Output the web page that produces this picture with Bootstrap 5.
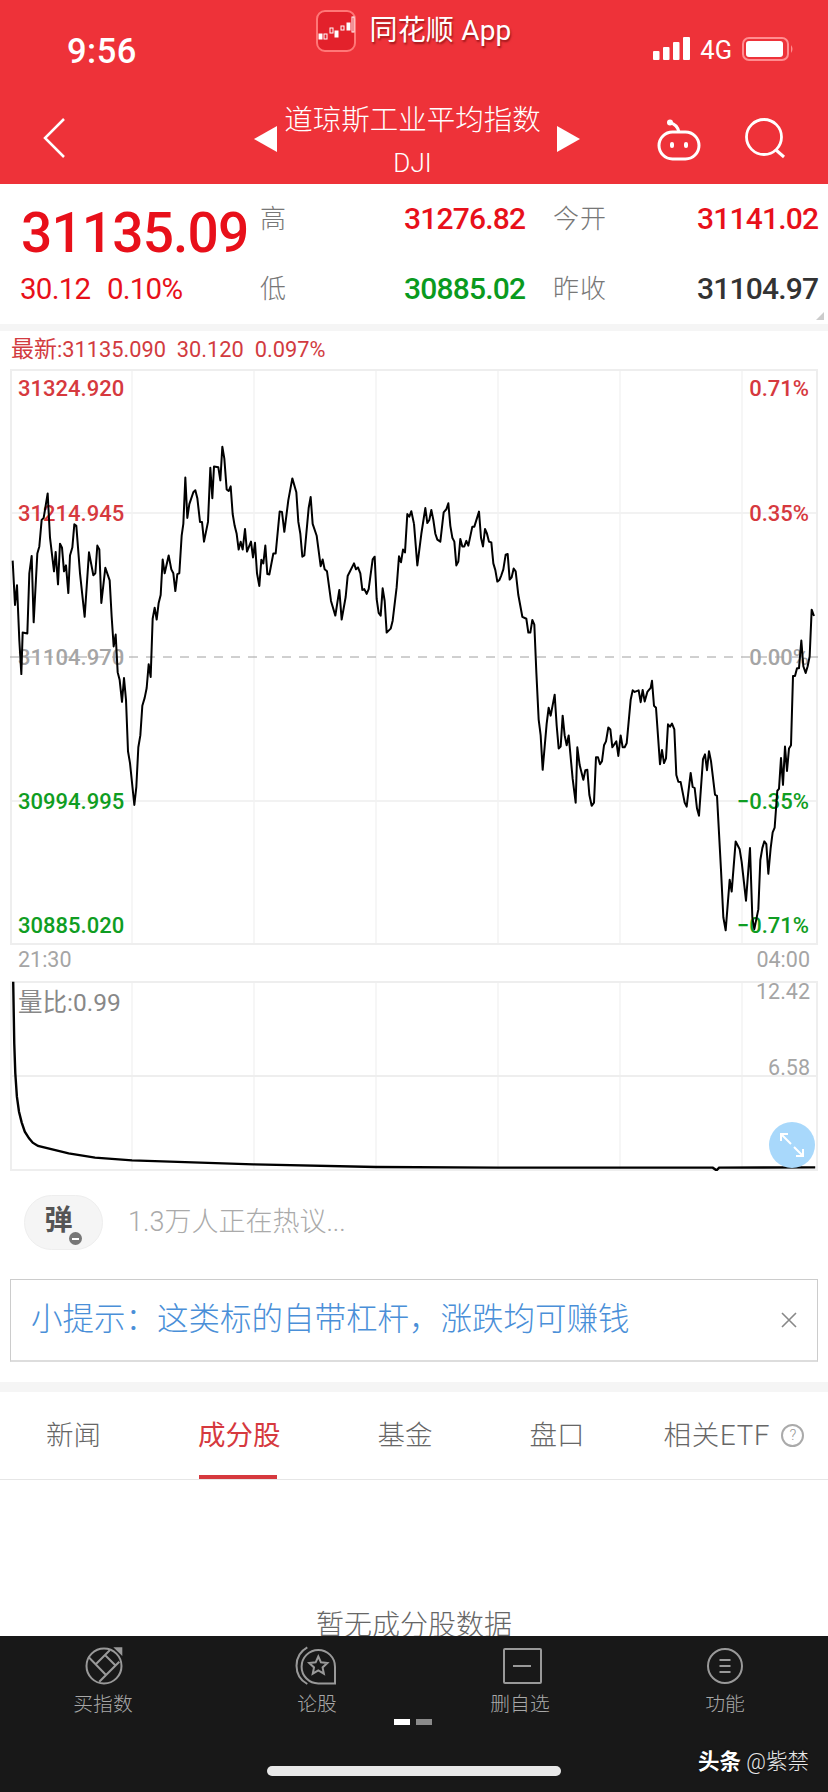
<!doctype html>
<html lang="zh">
<head>
<meta charset="utf-8">
<title>道琼斯工业平均指数</title>
<link href="https://cdn.jsdelivr.net/npm/bootstrap@5.3.0/dist/css/bootstrap.min.css" rel="stylesheet">
<style>
html,body{margin:0;background:#fff}
body{width:828px;height:1792px;overflow:hidden;font-family:Roboto,"Noto Sans CJK SC",sans-serif;color:#333}
.app-shell{width:828px;height:1792px;overflow:hidden}
.top-red{height:184px;background:#ee3239;color:#fff;flex:none}
.status-row{display:grid;grid-template-columns:1fr auto 1fr;height:100px}
.clock{font-size:34.5px;font-weight:500;padding:32px 0 0 67px;line-height:38px;letter-spacing:.5px}
.app-tag{padding-top:10px;gap:13px;font-size:28px;line-height:42px;text-shadow:1px 2px 2px rgba(90,0,0,.55);font-weight:400;letter-spacing:.2px;white-space:nowrap}
.net{padding:37px 33px 0 0;gap:10px;font-size:25.5px;line-height:27px;justify-content:flex-end}
.title-row{display:grid;grid-template-columns:1fr auto 1fr}
.back-wrap{padding:17px 0 0 42px}
.title-mid{gap:9px;margin-left:6px}
.tri-l,.tri-r{width:0;height:0;border-top:13px solid transparent;border-bottom:13px solid transparent;margin-top:26px}
.tri-l{border-right:23px solid #fff;margin-left:-1px}
.tri-r{border-left:23px solid #fff;margin-left:6px}
.title-text{font-size:28.5px;line-height:36px;font-weight:300;text-align:center;width:258px;margin:3px 0 0 -2px;white-space:nowrap}
.title-sub{font-size:26px;line-height:36px;margin-top:6px;font-weight:300}
.tool-wrap{padding:18px 41px 0 0;gap:44px;justify-content:flex-end}
.quote-grid{height:140px;flex:none;display:grid;grid-template-columns:260px 144px 120px 29px 144px 120px;grid-template-rows:70px 70px;align-items:center;position:relative}
.big-num{font-size:55px;font-weight:500;color:#e8101a;line-height:54px;padding:27px 0 0 21px;letter-spacing:-.85px;white-space:nowrap}
.sub-num{font-size:29.5px;color:#e8101a;padding-left:20px;white-space:nowrap;word-spacing:10px;line-height:32px;letter-spacing:-.75px}
.q-lab{font-size:26px;line-height:32px;color:#777;font-weight:300;letter-spacing:1px}
.q-val{font-size:30px;line-height:32px;font-weight:500;letter-spacing:-.8px;white-space:nowrap}
.v-red{color:#e8101a}.v-green{color:#0a9a1e}.v-dark{color:#333}
.corner-mark{position:absolute;right:4px;bottom:4px;width:0;height:0;border-left:8px solid transparent;border-bottom:8px solid #ccc}
.gap-band{height:7px;background:#f5f5f5;flex:none}
.latest{height:38px;padding-left:11px;font-size:21.8px;line-height:38px;color:#d23b40;white-space:pre}
.latest b{font-weight:400;font-size:23px}
.chart-svg{display:block;width:828px}
.num-r{fill:#d6393e}.num-g{fill:#0f9d22}.num-n{fill:#a5a5a5}
.chart-svg text{font-family:Roboto,sans-serif;font-size:22px;font-weight:500}
.t-row{height:36px;padding:3px 18px 0 18px;font-size:21.5px;line-height:24px;color:#a5a5a5}
.chart-svg .vol-lab{font-family:Roboto,"Noto Sans CJK SC",sans-serif;font-size:24.5px;font-weight:400;fill:#888}
.chart-svg .vol-num{font-size:21.5px;font-weight:400}
.dm-row{height:108px;flex:none;padding:24px 0 0 24px;gap:25px}
.dm-pill{width:79px;height:55px;border-radius:28px;background:#f5f5f5;border:1px solid #eee;position:relative;font-size:28px;line-height:50px;text-align:center;color:#555;padding-right:10px;font-weight:700}
.dm-minus{position:absolute;right:20px;bottom:4px;width:13px;height:13px;border-radius:50%;background:#777;display:flex;align-items:center;justify-content:center}
.dm-minus::before{content:"";width:7px;height:2px;background:#fff}
.dm-text{font-size:27px;line-height:54px;color:#aaa;font-weight:300;white-space:nowrap}
.tip-box{height:83px;margin:0 10px 0 10px;border:1px solid #ccc;border-bottom:2px solid #ddd;padding:0 20px 0 20px;flex:none;color:#4a8fd8;font-size:31.5px;font-weight:300;white-space:nowrap}
.band-two{height:10px;background:#f5f5f5;margin-top:20px;flex:none}
.tab-row{height:88px;flex:none;border-bottom:1px solid #e6e6e6;padding:0 0 0 46px;font-size:27.5px;color:#666;font-weight:300;white-space:nowrap;line-height:1}
.tab-item{margin-right:97px;position:relative;height:100%;display:flex;align-items:center}
.tab-item.gap-short{margin-right:79px}
.tab-item.last{margin-right:11px;letter-spacing:.8px}
.tab-item.on{color:#d6393e;font-weight:400}
.tab-item.on::after{content:"";position:absolute;left:1px;width:78px;height:4px;bottom:0;background:#d6393e}
.tab-help{width:23px;height:23px;border:2px solid #aaa;border-radius:50%;font-size:15px;color:#999;text-align:center;line-height:19px;flex:none}
.body-empty{overflow:hidden;min-height:0;text-align:center;font-size:28px;color:#666;font-weight:300;padding-top:126px;line-height:40px}
.foot-bar{height:156px;background:#181818;flex:none;position:relative}
.foot-grid{display:grid;grid-template-columns:214px 203px 205px 60px;padding:10px 0 0 73px}
.foot-item{width:60px;text-align:center;color:#a8a8a8;font-size:19.8px;line-height:24px;white-space:nowrap;font-weight:300;display:flex;flex-direction:column;align-items:center}
.foot-item span{margin-top:7px}
.ic-line{fill:none;stroke:#999;stroke-width:2}
.dots{gap:6px;justify-content:center;margin:2px 0 0 -2px}
.dot-a,.dot-b{width:16px;height:6px}
.dot-a{background:#fff}.dot-b{background:#8a8a8a}
.home-bar{position:absolute;left:267px;bottom:16px;width:294px;height:10px;border-radius:5px;background:#e8e8e8}
.mark-wm{position:absolute;right:19px;bottom:17px;color:#fff;font-size:21.5px;line-height:26px;white-space:nowrap;text-shadow:0 0 2px rgba(0,0,0,.6)}
.mark-wm b{font-weight:700}
.mark-wm i{font-style:normal;font-weight:300;color:#e8e8e8}
</style>
</head>
<body>
<div class="app-shell d-flex flex-column">
  <header class="top-red">
    <div class="status-row">
      <div class="clock">9:56</div>
      <div class="app-tag d-flex align-items-start">
        <svg width="40" height="42" viewBox="0 0 40 42"><rect x="1" y="1" width="38" height="40" rx="8" fill="#e3212b" stroke="#f77" stroke-width="2"/><g fill="#fff" stroke="#fff" stroke-width="1"><rect x="3" y="24" width="3" height="5"/><rect x="8" y="24" width="3" height="5" fill="none"/><rect x="14" y="18" width="3" height="5" fill="none"/><rect x="19" y="21" width="3" height="6"/><rect x="25" y="16" width="3" height="4" fill="none"/><rect x="31" y="13" width="3" height="7"/><rect x="36" y="7" width="2" height="15" fill="none"/></g></svg>
        <span>同花顺 App</span>
      </div>
      <div class="net d-flex align-items-start">
        <svg width="37" height="24" viewBox="0 0 37 24"><g fill="#fff"><rect x="0" y="14" width="6.5" height="9" rx="1"/><rect x="10" y="10" width="6.5" height="13" rx="1"/><rect x="20" y="5" width="6.5" height="18" rx="1"/><rect x="30" y="0" width="7" height="23" rx="1"/></g></svg>
        <span>4G</span>
        <svg width="53" height="24" viewBox="0 0 53 24"><rect x="1" y="1" width="45" height="22" rx="6" fill="none" stroke="#ff8d90" stroke-width="2"/><rect x="4" y="4" width="37" height="16" rx="3" fill="#fff"/><path d="M49 8q3 4 0 8z" fill="#ff8d90"/></svg>
      </div>
    </div>
    <div class="title-row">
      <div class="back-wrap"><svg width="24" height="42" viewBox="0 0 24 42"><path d="M22 2 3 21l19 19" fill="none" stroke="#fff" stroke-width="2.5"/></svg></div>
      <div class="title-mid d-flex align-items-start">
        <div class="tri-l"></div>
        <div class="title-text">道琼斯工业平均指数<div class="title-sub">DJI</div></div>
        <div class="tri-r"></div>
      </div>
      <div class="tool-wrap d-flex align-items-start">
        <svg width="44" height="44" viewBox="0 0 44 44"><path d="M13 5q7 1 9 9" fill="none" stroke="#fff" stroke-width="3"/><circle cx="13" cy="4.5" r="3" fill="#fff"/><rect x="2" y="14" width="40" height="27" rx="13.5" fill="none" stroke="#fff" stroke-width="3"/><rect x="13" y="24" width="4" height="6" rx="2" fill="#fff"/><rect x="27" y="24" width="4" height="6" rx="2" fill="#fff"/></svg>
        <svg width="42" height="42" viewBox="0 0 42 42"><circle cx="19" cy="19" r="17.5" fill="none" stroke="#fff" stroke-width="2.8"/><path d="m31 32 8 7" stroke="#fff" stroke-width="3"/></svg>
      </div>
    </div>
  </header>

  <section class="quote-grid">
    <div class="big-num">31135.09</div>
    <div class="q-lab">高</div><div class="q-val v-red">31276.82</div><div></div>
    <div class="q-lab">今开</div><div class="q-val v-red">31141.02</div>
    <div class="sub-num">30.12 0.10%</div>
    <div class="q-lab">低</div><div class="q-val v-green">30885.02</div><div></div>
    <div class="q-lab">昨收</div><div class="q-val v-dark">31104.97</div>
    <div class="corner-mark"></div>
  </section>
  <div class="gap-band"></div>

  <section class="flex-none">
    <div class="latest"><b>最新</b>:31135.090  30.120  0.097%</div>
    <svg class="chart-svg" height="576" viewBox="0 0 828 576">
      <path d="M132 0V576M254 0V576M376 0V576M498 0V576M620 0V576M742 0V576" fill="none" stroke="#f4f4f4" stroke-width="1.5"/>
      <path d="M10 144H818M10 432H818" stroke="#f2f2f2" stroke-width="2" fill="none"/>
      <rect x="11" y="1" width="806" height="574" fill="none" stroke="#eee" stroke-width="2"/>
      <text x="18" y="27" class="num-r">31324.920</text>
      <text x="18" y="152" class="num-r">31214.945</text>
      <text x="18" y="296" class="num-n">31104.970</text>
      <text x="18" y="440" class="num-g">30994.995</text>
      <text x="18" y="564" class="num-g">30885.020</text>
      <text x="809" y="27" text-anchor="end" class="num-r">0.71%</text>
      <text x="809" y="152" text-anchor="end" class="num-r">0.35%</text>
      <text x="809" y="296" text-anchor="end" class="num-n">0.00%</text>
      <text x="809" y="440" text-anchor="end" class="num-g">−0.35%</text>
      <text x="809" y="564" text-anchor="end" class="num-g">−0.71%</text>
      <path d="M10 288H818" stroke="#a0a0a0" stroke-width="1" stroke-dasharray="9 8" fill="none"/>
      <g fill="none" stroke="#000" stroke-width="2" stroke-linejoin="round">
      <g transform="translate(0,-29) scale(.33333,.39541)">
        <polyline vector-effect="non-scaling-stroke" points="38,558 45,670 51,620 58,760 64,845 68,740 82,742 88,590 95,546 101,714 112,540 118,522 125,455 131,450 143,388 150,500 162,585 167,536 174,618 180,515 186,525 192,585 198,570 205,640 210,545 217,525 223,466 229,470 240,590 254,700 267,537 280,595 286,590 292,520 298,530 304,665 316,576 329,608 335,700 341,775 347,745 353,840 359,860 366,915 372,855 378,910 384,1040 390,1070 403,1176 409,1130 415,1030 421,1000 427,925 434,905 440,880 446,820 452,852 458,705 464,677 470,707 476,665 482,645 488,555 494,590 506,545 514,580 520,590 526,635 532,592 538,590 545,495 550,465 556,348 562,450 568,415 580,385 586,380 592,400 600,460 606,460 612,510 624,460 631,323 637,400 642,320 655,322 661,355 667,270 673,300 680,378 686,382 692,370 698,440 704,470 710,490 716,530 722,510 728,530 735,478 741,535 753,510 759,550 765,513 771,590 778,622 784,556 790,565 796,520 802,592 808,593 820,540 827,540 839,434 846,435 853,485 865,405 877,350 889,385 895,460 901,490 907,548 913,545 926,425 932,397 938,465 950,495 962,572 968,555 974,580 981,585 993,660 1006,697 1018,632 1025,707 1037,650 1043,597 1062,565 1068,580 1074,575 1081,590 1087,632 1093,630 1100,642 1106,630 1118,555 1124,548 1130,655 1136,690 1142,697 1148,628 1154,660 1160,740 1172,730 1178,710 1190,625 1197,547 1203,562 1209,530 1215,537 1222,440 1228,447 1234,433 1242,465"/>
      </g>
      <g transform="translate(414,-29) scale(.33333,.39541)">
        <polyline vector-effect="non-scaling-stroke" points="0,465 10,570 22,490 34,425 40,463 46,455 52,430 58,455 64,490 70,505 79,510 89,436 97,428 103,413 109,470 115,500 121,510 127,570 133,560 139,503 145,522 151,522 157,508 163,520 175,472 181,472 195,434 201,500 207,522 213,478 219,490 225,510 232,512 238,565 244,582 250,611 256,607 262,595 268,580 275,543 281,541 287,606 293,600 299,578 305,585 313,645 325,700 337,705 343,740 349,740 355,708 361,720 367,840 374,960 380,1000 386,1087 398,970 404,930 410,950 422,897 428,975 434,1033 440,1028 446,950 452,1000 458,1025 464,1000 476,1110 485,1170 490,1030 497,1075 508,1112 514,1088 520,1087 526,1150 533,1178 540,1170 546,1055 552,1055 558,1073 564,1065 570,1025 576,1015 583,980 589,985 595,1030 607,1015 613,1052 620,1000 626,1030 632,1030 638,1020 650,910 656,886 662,890 674,886 680,916 686,885 692,914 700,890 710,880 714,862 720,925 726,930 738,1073 744,1037 750,1070 756,1058 762,972 768,978 774,970 781,985 787,1100 793,1117 800,1118 812,1170 818,1180 830,1095 836,1130 842,1133 849,1185 855,1203 867,1060 873,1048 879,1088 885,1040 891,1065 903,1150 909,1153 921,1340 928,1460 935,1493 947,1365 953,1395 965,1268 977,1288 983,1320 996,1418 1008,1285 1015,1460 1021,1490 1033,1440 1039,1315 1045,1285 1051,1268 1057,1275 1063,1350 1070,1285 1076,1245 1082,1233 1090,1140 1095,1135 1101,1057 1107,1125 1113,1028 1119,1090 1125,1033 1131,1025 1137,850 1143,850 1149,830 1155,830 1162,760 1168,825 1175,842 1181,825 1187,800 1193,682 1200,698"/>
      </g>
      </g>
    </svg>
    <div class="t-row d-flex justify-content-between"><span>21:30</span><span>04:00</span></div>
    <svg class="chart-svg" height="190" viewBox="0 0 828 190">
      <path d="M132 0V190M254 0V190M376 0V190M498 0V190M620 0V190M742 0V190" stroke="#f4f4f4" stroke-width="1.5" fill="none"/>
      <path d="M10 95H818" stroke="#eee" stroke-width="2" fill="none"/>
      <rect x="11" y="1" width="806" height="188" fill="none" stroke="#eee" stroke-width="2"/>
      <text x="18" y="30" class="vol-lab">量比:0.99</text>
      <text x="810" y="18" text-anchor="end" class="num-n vol-num">12.42</text>
      <text x="810" y="94" text-anchor="end" class="num-n vol-num">6.58</text>
      <g transform="translate(0,-21) scale(.528,.33333)">
        <polyline vector-effect="non-scaling-stroke" fill="none" stroke="#000" stroke-width="2.4" points="25,65 27,250 29,340 32,410 36,455 41,487 47,515 55,535 62,548 72,558 130,580 180,593 250,601 480,613 712,621 943,623 1350,623 1357,631 1362,623 1544,622"/>
      </g>
      <circle cx="792" cy="164" r="23" fill="#a8d8fb"/>
      <path fill="none" stroke="#fff" stroke-width="2" d="M781 153l10 10M781 160v-7h7M794 166l9 9M796 175h7v-7"/>
    </svg>
  </section>

  <div class="dm-row d-flex align-items-start">
    <div class="dm-pill">弹<span class="dm-minus"></span></div>
    <div class="dm-text">1.3万人正在热议...</div>
  </div>

  <div class="tip-box d-flex align-items-center justify-content-between">
    <span>小提示：这类标的自带杠杆，涨跌均可赚钱</span>
    <svg width="16" height="16" viewBox="0 0 16 16"><path d="M1 1l14 14M15 1 1 15" stroke="#888" stroke-width="1.6" fill="none"/></svg>
  </div>
  <div class="band-two"></div>

  <nav class="tab-row d-flex align-items-center">
    <div class="tab-item">新闻</div>
    <div class="tab-item on">成分股</div>
    <div class="tab-item">基金</div>
    <div class="tab-item gap-short">盘口</div>
    <div class="tab-item last">相关ETF</div>
    <div class="tab-help">?</div>
  </nav>
  <div class="body-empty flex-grow-1">暂无成分股数据</div>

  <footer class="foot-bar">
    <div class="foot-grid">
      <div class="foot-item">
        <svg width="60" height="40" viewBox="0 0 60 40"><g transform="translate(11,0)"><circle class="ic-line" cx="20" cy="20" r="17.5"/><path class="ic-line" d="M4.3 10.7 22 29M12 18 26 4M15.3 35.7 35.3 15.7M21 9 31 19"/><path d="M29.3 1.3h9v8.7z" fill="#999"/></g></svg>
        <span>买指数</span>
      </div>
      <div class="foot-item">
        <svg width="60" height="40" viewBox="0 0 60 40"><g transform="translate(7,0)"><path class="ic-line" d="M24.3 37.4H41V20.7A16.7 16.7 0 1 0 24.3 37.4Z"/><path class="ic-line" d="M13.3 1.3A21 21 0 0 0 13.3 38"/><polygon class="ic-line" points="24.3,10.5 26.95,16.36 33.33,17.06 28.58,21.39 29.88,27.69 24.3,24.5 18.72,27.69 20.02,21.39 15.27,17.06 21.65,16.36"/></g></svg>
        <span>论股</span>
      </div>
      <div class="foot-item">
        <svg width="60" height="40" viewBox="0 0 60 40"><rect class="ic-line" x="14" y="3" width="37" height="34" rx="1"/><path class="ic-line" d="M23 20h18"/></svg>
        <span>删自选</span>
      </div>
      <div class="foot-item">
        <svg width="60" height="40" viewBox="0 0 60 40"><circle class="ic-line" cx="30" cy="20" r="17"/><path class="ic-line" d="M24.5 14h11M24.5 20h11M24.5 26h11"/></svg>
        <span>功能</span>
      </div>
    </div>
    <div class="dots d-flex"><div class="dot-a"></div><div class="dot-b"></div></div>
    <div class="home-bar"></div>
    <div class="mark-wm"><b>头条</b> <i>@紫禁</i></div>
  </footer>
</div>
<script src="https://cdn.jsdelivr.net/npm/bootstrap@5.3.0/dist/js/bootstrap.bundle.min.js"></script>
</body>
</html>
